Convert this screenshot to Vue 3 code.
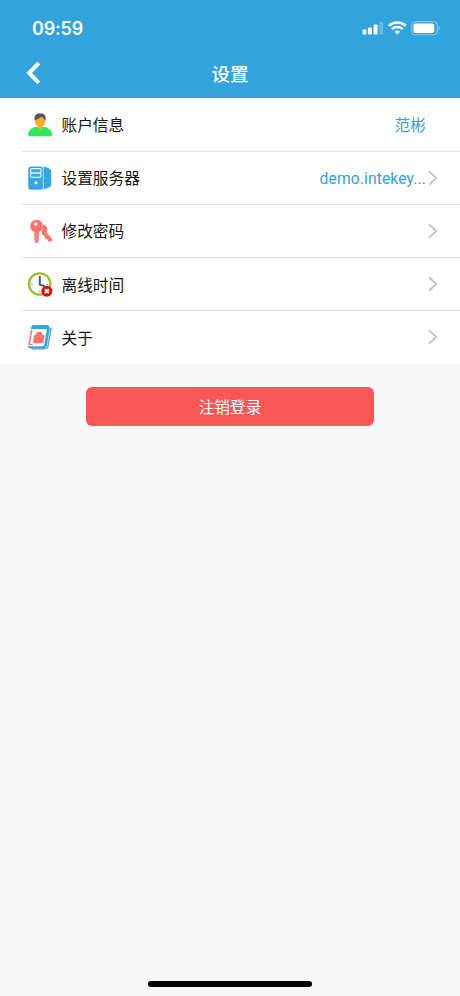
<script setup>
const rows = [
  { icon: 'user', label: '账户信息', value: '范彬', arrow: false },
  { icon: 'server', label: '设置服务器', value: 'demo.intekey...', arrow: true },
  { icon: 'key', label: '修改密码', value: '', arrow: true },
  { icon: 'clock', label: '离线时间', value: '', arrow: true },
  { icon: 'about', label: '关于', value: '', arrow: true },
]
</script>

<template>
  <div class="screen">
    <header class="header">
      <div class="status">
        <span class="time">09:59</span>
        <svg class="indicators" width="80" height="20" viewBox="0 0 80 20">
          <g fill="#fff">
            <rect x="2.5" y="11.5" width="4" height="5" rx="1" />
            <rect x="8" y="9.5" width="4" height="7" rx="1" />
            <rect x="13.6" y="6.5" width="4" height="10" rx="1" />
            <rect x="19.2" y="4" width="4" height="12.5" rx="1" opacity=".25" />
            <path d="M37.3 16.5l-2.7-2.7a3.9 3.9 0 0 1 5.4 0z" />
            <rect x="53.5" y="5.4" width="20.8" height="9.6" rx="2" />
            <path d="M78.6 8v4.2c1.9-.7 1.9-3.5 0-4.2z" opacity=".4" />
          </g>
          <g fill="none" stroke="#fff">
            <path d="M28.9 7.8a12.2 12.2 0 0 1 16.8 0M31.9 11.1a8 8 0 0 1 10.8 0" stroke-width="2.5" />
            <rect x="51.8" y="3.7" width="25.4" height="13" rx="3.5" stroke-width="1" opacity=".45" />
          </g>
        </svg>
      </div>
      <nav class="nav">
        <svg class="back" width="18" height="26" viewBox="0 0 18 26">
          <path d="M14.8 3.2L5.1 13l9.7 9.8" fill="none" stroke="#fff" stroke-width="4" />
        </svg>
        <h1 class="title">设置</h1>
      </nav>
    </header>

    <main class="list">
      <div v-for="row in rows" :key="row.icon" class="row">
        <svg class="icon" width="32" height="32" viewBox="0 0 32 32">
          <g v-if="row.icon === 'user'">
            <path d="M4.2 27.5c-.6-4.8 3.2-8 8.2-8.5h7.4c5 .5 8.8 3.7 8.2 8.5-.2.5-.6.7-1.2.7H5.4c-.6 0-1-.2-1.2-.7z" fill="#35e65b" />
            <path d="M11.1 9.5h10.2v3.8c0 2.6-1.2 4.1-2.6 5v1.5c-1 1.5-4 1.5-5 0v-1.5c-1.4-.9-2.6-2.4-2.6-5z" fill="#ffad29" />
            <path d="M10.9 13C9.6 8.5 11.5 5.2 16 5.2c4.8 0 6.7 3.4 5.3 7.8-.6-1.7-1.8-3.3-4-4.1-1.8 1.8-4.8 1.3-6.4 4.1z" fill="#53565b" />
          </g>
          <g v-else-if="row.icon === 'server'">
            <path d="M19.2 4.3l5.6 2q2.4.8 2.4 3v13.7q0 1.6-2.2 2.4l-5.8 2.1z" fill="#35a6e2" />
            <rect x="4.3" y="4.4" width="14.7" height="23.4" rx="2.5" fill="#35a6e2" />
            <path d="M19.3 5v22" stroke="#b4e0f8" stroke-width=".8" />
            <g fill="none" stroke="#e5f6ff" stroke-width="1.2">
              <rect x="6.6" y="6.7" width="10.4" height="4.3" rx="1.2" />
              <rect x="6.6" y="11" width="10.4" height="4.3" rx="1.2" />
            </g>
            <circle cx="12" cy="20.8" r="1.5" fill="#fff" />
          </g>
          <g v-else-if="row.icon === 'key'" fill="#f8736e">
            <path d="M17.8 9.2c4.3 0 6.8 4.2 4.9 8l5.7 7.4-1.1 2.2-2.8-.5-1.5-2.4-2-.3-.4-2.5-2.6-1.9z" />
            <path d="M12.3 4.7a6.4 6.4 0 0 1 3 12.2l-.5 10-2.6 1.5-1.9-1.6.8-1.5-1.6-1.2 1.3-1.7-.9-.8.4-4.5A6.4 6.4 0 0 1 12.3 4.7z" stroke="#fff" stroke-width=".35" />
            <circle cx="11.7" cy="9" r="1.7" fill="#fff" />
            <path d="M20.5 17l4.8 6.7M12.6 17.8v7.9" fill="none" stroke="#ffaaa6" stroke-width=".5" />
          </g>
          <g v-else-if="row.icon === 'clock'">
            <circle cx="15.7" cy="16" r="10.7" fill="#fff" stroke="#a1bd30" stroke-width="2.3" />
            <path d="M15.8 8v8.6l4.8 1.6" fill="none" stroke="#515a66" stroke-width="2" />
            <path d="M7.2 16.3h1.6M22.7 16.3h1.6M15.6 22.7v1.6" stroke="#929894" stroke-width="1.2" />
            <circle cx="22.9" cy="23.2" r="5.5" fill="#d80f0c" />
            <path d="M21 21.3l3.8 3.8m0-3.8L21 25.1" stroke="#fff" stroke-width="2" />
          </g>
          <g v-else>
            <path d="M24.6 6.5l3.2.3-3.2 18.4q-.7 3.3-4 3.3H8l-.6-1.3h10.8z" fill="#3ba4de" />
            <path d="M9.6 4.1h13.6q2.4 0 2 2.4L22.3 24.8q-.4 2.6-3 2.6H6q-2.3 0-1.9-2.4L7.2 6.2q.3-2.1 2.4-2.1z" fill="#3ba4de" />
            <path d="M7.1 8.1h15.8l-2.7 15.6q-.3 1.6-1.8 1.6H4.1z" fill="#fff" />
            <path d="M26.2 7.2l-3.1 18q-.4 2.3-2.5 2.5" fill="none" stroke="#fff" stroke-width=".6" />
            <path d="M7.8 9.2L5.1 23.6h3.6" fill="none" stroke="#f8736e" stroke-width="1.4" />
            <path d="M10.8 14h8.8q1.1 0 .9 1.1l-1 6q-.2 1.2-1.4 1.2h-8q-1.1 0-.9-1.1l.7-6.1q.1-1.1.9-1.1z" fill="#f8736e" />
            <path d="M12.5 15c.3-4.4 5.7-4.4 5.2 0" fill="#f8736e" stroke="#f8736e" stroke-width="2" />
          </g>
        </svg>
        <span class="label">{{ row.label }}</span>
        <span class="value">{{ row.value }}</span>
        <span class="arrow">
          <svg v-if="row.arrow" width="12" height="16" viewBox="0 0 12 16">
            <path d="M3 1.3L10.2 8 3 14.7" fill="none" stroke="#c5c6c9" stroke-width="2" />
          </svg>
        </span>
      </div>
    </main>

    <button class="logout" type="button">注销登录</button>
    <div class="home-bar"></div>
  </div>
</template>

<style>
body {
  margin: 0;
}
</style>

<style scoped>
.screen {
  display: flex;
  flex-direction: column;
  box-sizing: border-box;
  width: 460px;
  height: 996px;
  padding-bottom: 9px;
  background: #f9f9f9;
  font-family: Inter, "Noto Sans CJK SC", sans-serif;
  color: #171717;
}
.header {
  box-sizing: border-box;
  height: 98.4px;
  flex: none;
  background: #33a3dc;
  color: #fff;
}
.status {
  display: flex;
  align-items: center;
  justify-content: space-between;
  height: 38px;
  padding: 9px 20px 0 32px;
}
.time {
  font-size: 18px;
  font-weight: 600;
  letter-spacing: -0.2px;
}
.nav {
  display: grid;
  grid-template-columns: 60px 1fr 60px;
  align-items: center;
  height: 52px;
}
.back {
  margin-left: 24px;
}
.title {
  margin: 0;
  padding-top: 1px;
  text-align: center;
  font-size: 18.5px;
  line-height: 26px;
  font-weight: 500;
}
.list {
  flex: none;
  background: #fff;
}
.row {
  display: flex;
  align-items: center;
  box-sizing: border-box;
  height: 53.2px;
  margin-left: 22px;
  padding: 0 20px 0 2px;
  border-bottom: 1px solid #dedfe1;
}
.row:last-child {
  border-bottom-color: transparent;
}
.icon {
  flex: none;
}
.label {
  margin-left: 5.5px;
  padding-top: 3px;
  font-size: 15.7px;
  line-height: 24px;
}
.value {
  margin-left: auto;
  padding-top: 3px;
  font-family: Roboto, "Noto Sans CJK SC", sans-serif;
  font-size: 15.7px;
  line-height: 24px;
  letter-spacing: 0.1px;
  color: #3aa0d8;
}
.arrow {
  display: flex;
  width: 14px;
}
.logout {
  align-self: center;
  flex: none;
  width: 288px;
  height: 39px;
  margin: 22.6px 0 0;
  padding: 0;
  border: 0;
  border-radius: 6px;
  background: #f95656;
  color: #fff;
  font: 400 15.7px/39px "Noto Sans CJK SC", sans-serif;
}
.home-bar {
  align-self: center;
  width: 164px;
  height: 6px;
  margin-top: auto;
  border-radius: 3px;
  background: #000;
}
</style>
